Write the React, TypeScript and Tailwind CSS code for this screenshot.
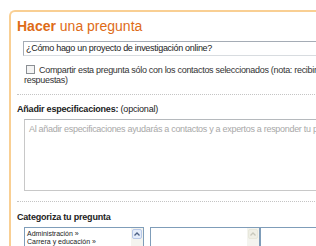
import React from 'react';

const ListBox = ({ items, className, disabled }: { items: string[]; className: string; disabled?: boolean }) => (
  <div className={`flex shrink-0 border border-[#7f9db9] bg-white h-[40px] ${className}`}>
    <ul className="flex-1 pl-[2px] pt-[2px] text-[7px] leading-[8px] text-[#222] whitespace-nowrap overflow-hidden">
      {items.map((it) => (
        <li key={it} className="h-[8px]">{it} »</li>
      ))}
    </ul>
    <div className="w-[12px] flex flex-col bg-[#f4f4ef]">
      <div
        className={`h-[10px] m-[1px] flex items-center justify-center rounded-[2px] border ${
          disabled ? 'border-[#e8e8dc] bg-[#efefe6] text-[#c8c8bc]' : 'border-[#b8c8e8] bg-[#e4ecfa] text-[#4d6185]'
        }`}
      >
        <svg width="6" height="4" viewBox="0 0 6 4">
          <path d="M0.5 3.5 L3 1 L5.5 3.5" fill="none" stroke="currentColor" strokeWidth="1.3" />
        </svg>
      </div>
    </div>
  </div>
);

export default function App() {
  return (
    <div className="w-[316px] h-[246px] overflow-hidden bg-white font-['Liberation_Sans',Arial,sans-serif]">
      <div className="ml-[9px] mt-[10px] border-l-2 border-t-2 border-[#f9cf93] rounded-tl-[6px] pl-[6px] pt-[6px] h-[300px] w-[340px]">
        <h1 className="text-[14px] leading-[16px] text-[#de6b17] whitespace-nowrap">
          <span className="font-bold">Hacer</span> una pregunta
        </h1>
        <div className="ml-[6px] mt-[7px] h-[15px] border border-[#a5acb5] border-b-[#d8dce0] pl-[2px] text-[9px] leading-[13px] tracking-[-0.3px] text-[#222] whitespace-nowrap overflow-hidden">
          ¿Cómo hago un proyecto de investigación online?
        </div>
        <div className="ml-[7px] mt-[9px] text-[9px] leading-[10px] tracking-[-0.3px] text-[#333] w-[330px]">
          <span className="inline-block align-[-1px] w-[9px] h-[9px] border border-[#8b8f94] bg-[#f4f4f4] mr-[4px] ml-[2px]" />
          Compartir esta pregunta sólo con los contactos seleccionados (nota: recibirás respuestas)
        </div>
        <div className="mt-[9px] border-t border-dotted border-[#c4c4c4]" />
        <h2 className="mt-[9px] text-[9px] leading-[10px] tracking-[-0.2px] text-[#222] whitespace-nowrap">
          <span className="font-bold">Añadir especificaciones:</span> (opcional)
        </h2>
        <div className="ml-[7px] mt-[5px] h-[72px] border border-[#c8c8c8] border-t-[#b5b9bd] pl-[4px] pt-[4px] text-[9px] leading-[10px] tracking-[-0.3px] text-[#a8a8a8] whitespace-nowrap overflow-hidden">
          Al añadir especificaciones ayudarás a contactos y a expertos a responder tu pregunta
        </div>
        <div className="mt-[10px] border-t border-dotted border-[#c4c4c4]" />
        <h2 className="mt-[10px] text-[9px] leading-[10px] tracking-[-0.2px] font-bold text-[#222]">Categoriza tu pregunta</h2>
        <div className="ml-[7px] mt-[5px] flex">
          <ListBox className="w-[120px]" items={['Administración', 'Carrera y educación']} />
          <ListBox className="ml-[6px] w-[111px] border-r-2" items={[]} disabled />
          <ListBox className="w-[80px] border-l-0" items={[]} disabled />
        </div>
      </div>
    </div>
  );
}
